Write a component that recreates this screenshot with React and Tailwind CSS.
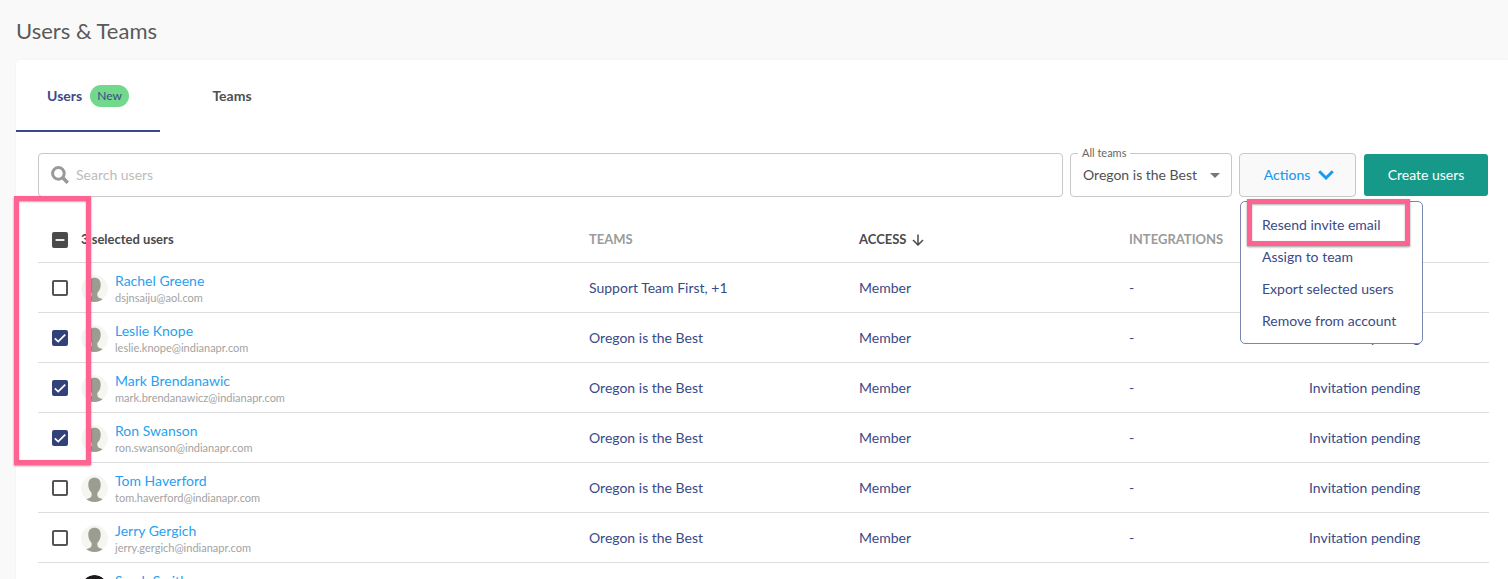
import React, { useState } from 'react';

const USERS = [
  { id: 1, name: 'Rachel Greene', email: 'dsjnsaiju@aol.com', teams: 'Support Team First, +1', access: 'Member', status: '' },
  { id: 2, name: 'Leslie Knope', email: 'leslie.knope@indianapr.com', teams: 'Oregon is the Best', access: 'Member', status: 'Invitation pending' },
  { id: 3, name: 'Mark Brendanawic', email: 'mark.brendanawicz@indianapr.com', teams: 'Oregon is the Best', access: 'Member', status: 'Invitation pending' },
  { id: 4, name: 'Ron Swanson', email: 'ron.swanson@indianapr.com', teams: 'Oregon is the Best', access: 'Member', status: 'Invitation pending' },
  { id: 5, name: 'Tom Haverford', email: 'tom.haverford@indianapr.com', teams: 'Oregon is the Best', access: 'Member', status: 'Invitation pending' },
  { id: 6, name: 'Jerry Gergich', email: 'jerry.gergich@indianapr.com', teams: 'Oregon is the Best', access: 'Member', status: 'Invitation pending' },
  { id: 7, name: 'Sarah Smith', email: 'sarah.smith@indianapr.com', teams: '', access: '', status: '', photo: true }
];

const MENU_ITEMS = ['Resend invite email', 'Assign to team', 'Export selected users', 'Remove from account'];

// Pink highlight frame
const Highlight = ({ className }) => (
  <div className={`pointer-events-none absolute border-5 border-[#ff6392] shadow-[0_1px_2px_rgba(0,0,0,0.4),inset_0_1px_2px_rgba(0,0,0,0.3)] ${className}`} />
);

const Avatar = ({ photo }) => (
  <svg viewBox="0 0 27 27" className="h-[27px] w-[27px] shrink-0 rounded-full" aria-hidden="true">
    <circle cx="13.5" cy="13.5" r="13.5" fill={photo ? '#1d1a1c' : '#f5f5f1'} />
    {photo ? (
      <path d="M9 13c0-4 2-6 4.500-6s4.500 2 4.500 6-2 7-4.500 7S9 17 9 13Z" fill="#c99a80" />
    ) : (
      <path
        d="M13.500 2.800c3.900 0 6.200 2.700 6.200 6.700 0 3-.9 5.900-2.600 7.600-.7.800-.8 1.500-.8 2.300 0 2.400 1.300 3.300 3.600 4.100l2.300.9a13.500 13.500 0 0 1-17.400 0l2.300-.9c2.300-.8 3.600-1.700 3.600-4.100 0-.8-.1-1.500-.8-2.300-1.700-1.700-2.600-4.600-2.600-7.600 0-4 2.300-6.700 6.200-6.700Z"
        fill="#9c9c90"
      />
    )}
  </svg>
);

const Checkbox = ({ label, checked, mixed, onChange }) => (
  <span className="relative flex h-4 w-4">
    <input
      type="checkbox"
      aria-label={label}
      checked={checked}
      onChange={onChange}
      className={`h-4 w-4 cursor-pointer appearance-none rounded-[2px] border-2 ${
        mixed
          ? 'border-[#4a4a4a] bg-[#4a4a4a]'
          : 'border-[#555555] bg-white checked:border-[#33417a] checked:bg-[#33417a]'
      }`}
    />
    {(checked || mixed) && (
      <svg viewBox="0 0 16 16" className="pointer-events-none absolute inset-0 h-4 w-4" fill="none" stroke="#ffffff" strokeWidth="1.800" aria-hidden="true">
        <path d={mixed ? 'M3.600 8h8.800' : 'M2.800 8.300 6.200 11.600 13.200 4.600'} />
      </svg>
    )}
  </span>
);

const Tabs = () => (
  <nav className="flex h-18 text-sm font-bold">
    <a href="#users" className="flex w-36 items-center justify-center gap-2 border-b-2 border-[#3a4a87] pt-[2px] text-[#3a4a87]">
      Users
      <span className="rounded-full bg-[#72d88b] px-[7px] text-xs leading-[22px] font-normal">New</span>
    </a>
    <a href="#teams" className="flex w-36 items-center justify-center border-b-2 border-transparent pt-[2px] text-[#505050]">
      Teams
    </a>
  </nav>
);

const ActionsMenu = () => (
  <ul className="absolute top-12 left-px z-10 w-[183px] rounded-[5px] border border-[#7886b0] bg-white pt-[7px] pb-[6px]">
    {MENU_ITEMS.map((item, index) => (
      <li key={item} className="relative">
        <button type="button" className="block h-8 w-full cursor-pointer px-[21px] text-left whitespace-nowrap text-[#3a4a87]">
          {item}
        </button>
        {index === 0 && <Highlight className="-top-[10px] left-[6px] h-[47px] w-[163px]" />}
      </li>
    ))}
  </ul>
);

const Toolbar = () => {
  const [open, setOpen] = useState(true);

  return (
    <div className="flex items-center gap-[7px]">
      <label className="flex h-11 min-w-0 flex-1 items-center gap-[7px] rounded-[4px] border border-[#c8c8c8] px-3">
        <svg viewBox="0 0 18 18" className="h-[18px] w-[18px]" fill="none" stroke="#999999" strokeWidth="3" aria-hidden="true">
          <circle cx="7.400" cy="7.400" r="5.800" />
          <path d="m11.800 11.800 5 5" strokeWidth="3.600" />
        </svg>
        <input
          type="text"
          placeholder="Search users"
          aria-label="Search users"
          className="min-w-0 flex-1 outline-none placeholder:text-[#bcbcbc]"
        />
      </label>

      <div className="relative w-[162px]">
        <label htmlFor="team" className="absolute -top-[7px] left-2 bg-white px-1 text-[11px] leading-[14px] text-[#666666]">
          All teams
        </label>
        <select id="team" className="h-11 w-full appearance-none rounded-[4px] border border-[#c8c8c8] bg-transparent pl-3 text-[#505050]">
          <option>Oregon is the Best</option>
        </select>
        <svg viewBox="0 0 10 5" className="pointer-events-none absolute top-5 right-3 h-[5px] w-[10px]" fill="#777777" aria-hidden="true">
          <path d="M0 0h10L5 5Z" />
        </svg>
      </div>

      <div className="relative">
        <button
          type="button"
          onClick={() => setOpen(!open)}
          className="flex h-11 w-[117px] cursor-pointer items-center justify-center gap-2 rounded-[4px] border border-[#c8c8c8] bg-[#f9f9f9] pl-[3px] font-medium text-[#1a9bf2]"
        >
          Actions
          <svg viewBox="0 0 16 10" className="h-[10px] w-4" fill="none" stroke="currentColor" strokeWidth="3" aria-hidden="true">
            <path d="m1.200 1.300 6.800 6.700 6.800-6.700" />
          </svg>
        </button>
        {open && <ActionsMenu />}
      </div>

      <button type="button" className="ml-px h-[42px] w-[124px] cursor-pointer rounded-[3px] bg-[#17998a] text-white">
        Create users
      </button>
    </div>
  );
};

const UsersTable = () => {
  const [selected, setSelected] = useState([2, 3, 4]);

  const toggle = (id) => {
    setSelected(selected.includes(id) ? selected.filter((item) => item !== id) : [...selected, id]);
  };

  const toggleAll = () => {
    setSelected(selected.length ? [] : USERS.map((user) => user.id));
  };

  const allSelected = selected.length === USERS.length;

  return (
    <div className="relative -mr-px">
      <table className="w-full table-fixed border-collapse text-left">
        <thead>
          <tr className="h-[65px] border-b border-[#dddddd] text-[13px] text-[#9b9b9b]">
            <th className="w-[43px] pt-[21px] pl-[14px]">
              <Checkbox label="Select all users" checked={allSelected} mixed={selected.length > 0 && !allSelected} onChange={toggleAll} />
            </th>
            <th className="pt-[21px] text-[#4a4a4a]">{selected.length} selected users</th>
            <th className="w-[270px] pt-[21px]">TEAMS</th>
            <th className="w-[270px] pt-[21px] text-[#4a4a4a]">
              <button type="button" className="flex cursor-pointer items-center gap-[6px] font-bold">
                ACCESS
                <svg viewBox="0 0 12 12" className="h-3 w-3" fill="none" stroke="currentColor" strokeWidth="1.500" aria-hidden="true">
                  <path d="M6 .5v10.500M1 6l5 5 5-5" />
                </svg>
              </button>
            </th>
            <th className="w-[180px] pt-[21px]">INTEGRATIONS</th>
            <th className="w-[180px] pt-[21px]" aria-label="Status" />
          </tr>
        </thead>
        <tbody>
          {USERS.map((user) => (
            <tr key={user.id} className="h-[50px] border-b border-[#dddddd] text-[#3a4a87]">
              <td className="pt-px pl-[14px]">
                <Checkbox label={`Select ${user.name}`} checked={selected.includes(user.id)} onChange={() => toggle(user.id)} />
              </td>
              <td className="pt-[2px]">
                <div className="flex items-center gap-[7px]">
                  <Avatar photo={user.photo} />
                  <div>
                    <a href="#user" className="block leading-5 text-[#2a9ff0]">{user.name}</a>
                    <div className="text-[11px] leading-[14px] text-[#a3a3a3]">{user.email}</div>
                  </div>
                </div>
              </td>
              <td className="pt-[2px]">{user.teams}</td>
              <td className="pt-[2px]">{user.access}</td>
              <td className="pt-[2px]">{user.teams && '-'}</td>
              <td className="pt-[2px]">{user.status}</td>
            </tr>
          ))}
        </tbody>
      </table>
      <Highlight className="-top-px -left-6 h-[269px] w-[77px]" />
    </div>
  );
};

const App = () => {
  return (
    <div className="h-screen overflow-hidden bg-[#f9f9f9] font-['Lato',sans-serif] text-sm">
      <h1 className="px-4 pt-4 pb-[14px] text-[22px] leading-[30px] text-[#5a5a5a]">Users &amp; Teams</h1>
      <main className="ml-4 rounded-tl-[4px] bg-white shadow-[0_0_2px_rgba(0,0,0,0.06)]">
        <Tabs />
        <div className="pt-[21px] pr-5 pl-[22px]">
          <Toolbar />
          <UsersTable />
        </div>
      </main>
    </div>
  );
};

export default App;
